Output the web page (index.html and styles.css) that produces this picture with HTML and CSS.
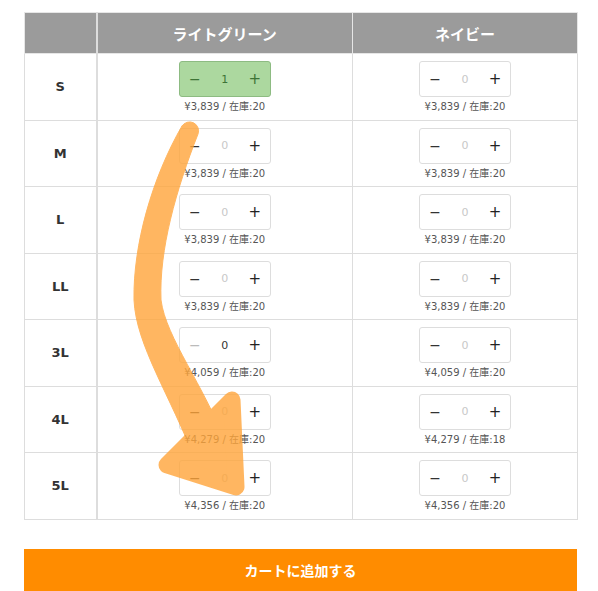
FILE: index.html
```html
<!DOCTYPE html>
<html lang="ja">
<head>
<meta charset="utf-8">
<title>カート</title>
<link rel="stylesheet" href="styles.css">
</head>
<body>
<main class="page">
  <table class="matrix">
    <colgroup><col class="c-size"><col class="c-a"><col class="c-b"></colgroup>
    <thead>
      <tr><th class="corner"></th><th>ライトグリーン</th><th>ネイビー</th></tr>
    </thead>
    <tbody>
      <tr>
        <th class="size">S</th>
        <td><div class="cell"><div class="stepper active"><span class="minus">−</span><span class="qty">1</span><span class="plus">+</span></div><div class="price">¥3,839 / 在庫:20</div></div></td>
        <td><div class="cell"><div class="stepper"><span class="minus">−</span><span class="qty">0</span><span class="plus">+</span></div><div class="price">¥3,839 / 在庫:20</div></div></td>
      </tr>
      <tr>
        <th class="size">M</th>
        <td><div class="cell"><div class="stepper"><span class="minus">−</span><span class="qty">0</span><span class="plus">+</span></div><div class="price">¥3,839 / 在庫:20</div></div></td>
        <td><div class="cell"><div class="stepper"><span class="minus">−</span><span class="qty">0</span><span class="plus">+</span></div><div class="price">¥3,839 / 在庫:20</div></div></td>
      </tr>
      <tr>
        <th class="size">L</th>
        <td><div class="cell"><div class="stepper"><span class="minus">−</span><span class="qty">0</span><span class="plus">+</span></div><div class="price">¥3,839 / 在庫:20</div></div></td>
        <td><div class="cell"><div class="stepper"><span class="minus">−</span><span class="qty">0</span><span class="plus">+</span></div><div class="price">¥3,839 / 在庫:20</div></div></td>
      </tr>
      <tr>
        <th class="size">LL</th>
        <td><div class="cell"><div class="stepper"><span class="minus">−</span><span class="qty">0</span><span class="plus">+</span></div><div class="price">¥3,839 / 在庫:20</div></div></td>
        <td><div class="cell"><div class="stepper"><span class="minus">−</span><span class="qty">0</span><span class="plus">+</span></div><div class="price">¥3,839 / 在庫:20</div></div></td>
      </tr>
      <tr>
        <th class="size">3L</th>
        <td><div class="cell"><div class="stepper focused"><span class="minus">−</span><span class="qty">0</span><span class="plus">+</span></div><div class="price">¥4,059 / 在庫:20</div></div></td>
        <td><div class="cell"><div class="stepper"><span class="minus">−</span><span class="qty">0</span><span class="plus">+</span></div><div class="price">¥4,059 / 在庫:20</div></div></td>
      </tr>
      <tr>
        <th class="size">4L</th>
        <td><div class="cell"><div class="stepper"><span class="minus">−</span><span class="qty">0</span><span class="plus">+</span></div><div class="price">¥4,279 / 在庫:20</div></div></td>
        <td><div class="cell"><div class="stepper"><span class="minus">−</span><span class="qty">0</span><span class="plus">+</span></div><div class="price">¥4,279 / 在庫:18</div></div></td>
      </tr>
      <tr>
        <th class="size">5L</th>
        <td><div class="cell"><div class="stepper"><span class="minus">−</span><span class="qty">0</span><span class="plus">+</span></div><div class="price">¥4,356 / 在庫:20</div></div></td>
        <td><div class="cell"><div class="stepper"><span class="minus">−</span><span class="qty">0</span><span class="plus">+</span></div><div class="price">¥4,356 / 在庫:20</div></div></td>
      </tr>
    </tbody>
  </table>
  <button class="add-cart" type="button">カートに追加する</button>
</main>
<svg class="arrow" width="598" height="591" viewBox="0 0 598 591" aria-hidden="true">
  <g opacity="0.8" fill="#ffa53a" stroke="#ffa53a" stroke-linecap="round" stroke-linejoin="round">
    <path d="M182,126 C152,178 133,245 134,300 C136,345 170,395 196,462 L226,444 C204,385 166,338 161,300 C159,250 176,190 198,134 A9,9 0 0 0 182,126 Z" stroke-width="1"/>
    <polygon points="232,400 167,465 236,487" stroke-width="17"/>
  </g>
</svg>
</body>
</html>
```

FILE: styles.css
```css
* { box-sizing: border-box; }

html, body {
  margin: 0;
  padding: 0;
  background: #ffffff;
}

body {
  font-family: "DejaVu Sans", "Noto Sans CJK JP", sans-serif;
  color: #333333;
  position: relative;
  width: 598px;
  height: 591px;
  overflow: hidden;
}

.page {
  padding: 12px 21px 0 24px;
  display: flex;
  flex-direction: column;
}

.matrix {
  width: 553px;
  border-collapse: collapse;
  table-layout: fixed;
}

.c-size { width: 72px; }
.c-a { width: 256px; }
.c-b { width: 225px; }

.matrix th,
.matrix td {
  border: 1px solid #dddddd;
  padding: 0;
}

.matrix thead th {
  height: 41px;
  background: #9b9b9b;
  color: #ffffff;
  font-family: "Noto Sans CJK JP", sans-serif;
  font-size: 15px;
  font-weight: 700;
  text-align: center;
  vertical-align: middle;
  border-color: #e6e6e6;
}

.matrix tbody tr { height: 66.5px; }

.matrix th.corner,
.matrix th.size {
  border-right: 2px solid #dddddd;
}

.matrix th.size {
  font-family: "DejaVu Sans", sans-serif;
  font-size: 13px;
  font-weight: 700;
  color: #333333;
  text-align: center;
  vertical-align: middle;
}

.matrix td { vertical-align: top; }

.cell {
  display: flex;
  flex-direction: column;
  align-items: center;
  padding-top: 7px;
}

.stepper {
  width: 92px;
  height: 36px;
  border: 1px solid #dddddd;
  border-radius: 3px;
  background: #ffffff;
  display: grid;
  grid-template-columns: 1fr 1fr 1fr;
  align-items: center;
  font-family: "DejaVu Sans", sans-serif;
  font-size: 13px;
}

.stepper span { text-align: center; }

.stepper .minus { color: #333333; font-size: 14px; }
.stepper .qty { color: #c8c8c8; font-size: 11px; }
.stepper .plus { color: #222222; font-size: 15px; }

.stepper.active {
  background: #acd89f;
  border-color: #8dbb82;
}
.stepper.active .minus,
.stepper.active .qty,
.stepper.active .plus { color: #3d7336; }

.stepper.focused .minus { color: #bbbbbb; }
.stepper.focused .qty { color: #333333; }

.price {
  margin-top: 3px;
  font-family: "DejaVu Sans", "Noto Sans CJK JP", sans-serif;
  font-size: 10px;
  line-height: 13px;
  color: #555555;
}

.add-cart {
  margin-top: 29px;
  width: 553px;
  height: 42px;
  border: none;
  border-radius: 0;
  background: #ff8c00;
  color: #ffffff;
  font-family: "Noto Sans CJK JP", sans-serif;
  font-size: 14px;
  font-weight: 700;
  padding: 0;
}

.arrow {
  position: absolute;
  left: 0;
  top: 0;
  pointer-events: none;
}
```
